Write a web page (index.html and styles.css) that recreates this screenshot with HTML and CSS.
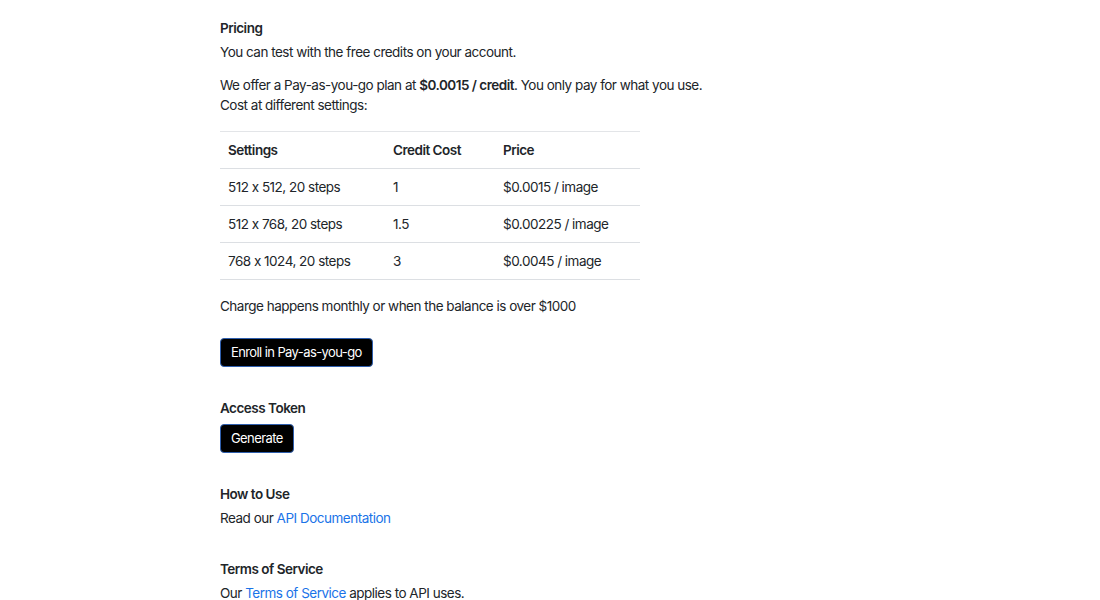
FILE: index.html
```html
<!DOCTYPE html>
<html>
<head>
<meta charset="utf-8">
<link rel="stylesheet" href="styles.css">
</head>
<body>
<main class="page">
  <section class="section pricing">
    <h3 class="title">Pricing</h3>
    <p class="text">You can test with the free credits on your account.</p>
    <p class="text gap">We offer a Pay-as-you-go plan at <strong>$0.0015 / credit</strong>. You only pay for what you use.<br>Cost at different settings:</p>
    <table class="table">
      <thead>
        <tr><th class="c1">Settings</th><th class="c2">Credit Cost</th><th>Price</th></tr>
      </thead>
      <tbody>
        <tr><td>512 x 512, 20 steps</td><td>1</td><td>$0.0015 / image</td></tr>
        <tr><td>512 x 768, 20 steps</td><td>1.5</td><td>$0.00225 / image</td></tr>
        <tr><td>768 x 1024, 20 steps</td><td>3</td><td>$0.0045 / image</td></tr>
      </tbody>
    </table>
    <p class="text charge">Charge happens monthly or when the balance is over $1000</p>
    <button class="btn enroll">Enroll in Pay-as-you-go</button>
  </section>
  <section class="section">
    <h3 class="title">Access Token</h3>
    <button class="btn small-gap">Generate</button>
  </section>
  <section class="section">
    <h3 class="title">How to Use</h3>
    <p class="text">Read our <a class="link" href="#">API Documentation</a></p>
  </section>
  <section class="section">
    <h3 class="title">Terms of Service</h3>
    <p class="text">Our <a class="link" href="#">Terms of Service</a> applies to API uses.</p>
  </section>
</main>
</body>
</html>
```
FILE: styles.css
```css
html, body {
  margin: 0;
  padding: 0;
  background: #ffffff;
}
body {
  font-family: Inter, "Noto Sans", sans-serif;
  font-size: 13.5px;
  line-height: 20px;
  letter-spacing: -0.5px;
  font-feature-settings: "calt" 0;
  color: #212529;
}
.page {
  padding: 18px 0 0 220px;
  display: flex;
  flex-direction: column;
  gap: 31px;
}
.section {
  display: flex;
  flex-direction: column;
  align-items: flex-start;
}
.title {
  margin: 0 0 4px 0;
  font-size: 13.5px;
  line-height: 20px;
  font-weight: 600;
}
.text {
  margin: 0;
}
.text.gap {
  margin-top: 13px;
}
.text strong {
  font-weight: 600;
}
.table {
  margin-top: 16px;
  width: 420px;
  border-collapse: collapse;
  border-top: 1px solid #e3e5e8;
}
.table th, .table td {
  text-align: left;
  padding: 8px 8px;
  height: 20px;
  line-height: 20px;
  border-bottom: 1px solid #dcdfe3;
  font-weight: 400;
}
.table th {
  font-weight: 600;
}
.table .c1 { width: 149px; }
.table .c2 { width: 94px; }
.charge {
  margin-top: 16px;
}
.btn {
  font-family: Inter, "Noto Sans", sans-serif;
  font-size: 13px;
  letter-spacing: -0.6px;
  font-feature-settings: "calt" 0;
  line-height: 19px;
  color: #ffffff;
  background: #000000;
  border: 1px solid #2f5fae;
  border-radius: 4px;
  padding: 4px 10px;
  cursor: pointer;
}
.enroll {
  margin-top: 22px;
}
.small-gap {
  margin-top: 2px;
}
.link {
  color: #1a73e8;
  text-decoration: none;
}
```
